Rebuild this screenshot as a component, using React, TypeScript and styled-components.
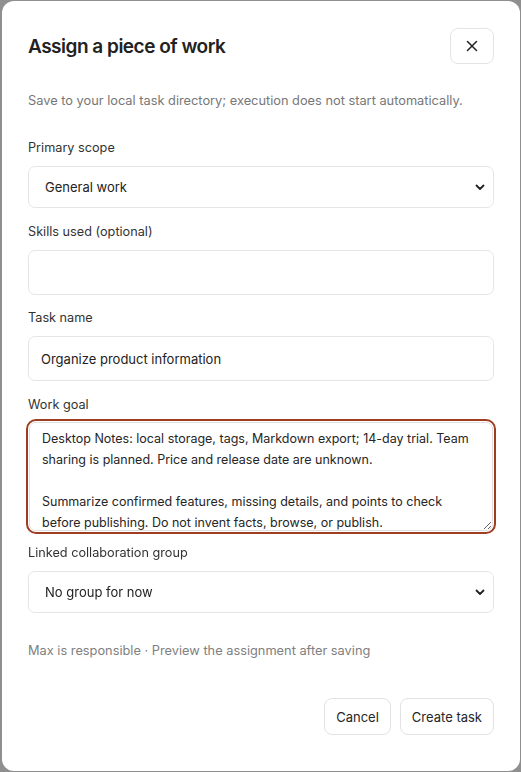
import styled, { createGlobalStyle } from "styled-components";

const GlobalStyle = createGlobalStyle`
  html, body {
    margin: 0;
    padding: 0;
    background: #8f8f8f;
  }
  body {
    font-family: Inter, "Noto Sans", "Liberation Sans", sans-serif;
    color: #262626;
  }
  * { box-sizing: border-box; }
`;

const Backdrop = styled.div`
  padding: 1px 1px 1px 2px;
  min-height: 772px;
`;

const Dialog = styled.div`
  background: #fff;
  border-radius: 12px;
  height: 770px;
  padding: 27px 26px 36px 26px;
  display: flex;
  flex-direction: column;
`;

const Header = styled.div`
  display: flex;
  align-items: center;
  justify-content: space-between;
`;

const Title = styled.h2`
  margin: 0;
  font-size: 19px;
  font-weight: 600;
  letter-spacing: -0.5px;
  color: #222;
`;

const CloseButton = styled.button`
  width: 44px;
  height: 36px;
  border: 1px solid #e4e4e4;
  border-radius: 8px;
  background: #fff;
  display: flex;
  align-items: center;
  justify-content: center;
  padding: 0;
  color: #222;
`;

const Lead = styled.p`
  margin: 29px 0 32px;
  font-size: 12.8px;
  color: #777;
`;

const Field = styled.div<{ $gap?: number; $after?: number }>`
  display: flex;
  flex-direction: column;
  gap: ${(p) => p.$gap ?? 11}px;
  margin-bottom: ${(p) => p.$after ?? 16}px;
`;

const Label = styled.label`
  font-size: 12.7px;
  color: #333;
`;

const Select = styled.div`
  height: 42px;
  border: 1px solid #e6e6e6;
  border-radius: 7px;
  display: flex;
  align-items: center;
  justify-content: space-between;
  padding: 0 7px 0 16px;
  font-size: 13px;
  color: #222;
`;

const Input = styled.input`
  height: 45px;
  border: 1px solid #e6e6e6;
  border-radius: 7px;
  padding: 0 12px;
  font: inherit;
  font-size: 13px;
  color: #222;
  outline: none;
`;

const TextArea = styled.textarea`
  height: 109px;
  border: 1px solid #e0e0e0;
  border-radius: 7px;
  outline: 2px solid #9e3d1f;
  outline-offset: 1px;
  padding: 5px 12px;
  font: inherit;
  font-size: 12.5px;
  line-height: 21px;
  color: #262626;
  resize: vertical;
  margin: 0 1px;
`;

const Meta = styled.p`
  margin: 14px 0 0;
  font-size: 12.8px;
  color: #808080;
`;

const Footer = styled.div`
  margin-top: auto;
  display: flex;
  justify-content: flex-end;
  gap: 9px;
`;

const Button = styled.button`
  height: 37px;
  padding: 0 11px;
  border: 1px solid #e2e2e2;
  border-radius: 8px;
  background: #fff;
  font: inherit;
  font-size: 13px;
  color: #262626;
`;

const Chevron = () => (
  <svg width="12" height="12" viewBox="0 0 12 12" fill="none">
    <path d="M2.5 4.5 6 8l3.5-3.5" stroke="#222" strokeWidth="1.8" strokeLinecap="round" strokeLinejoin="round" />
  </svg>
);

const goal =
  "Desktop Notes: local storage, tags, Markdown export; 14-day trial. Team sharing is planned. Price and release date are unknown.\n\nSummarize confirmed features, missing details, and points to check before publishing. Do not invent facts, browse, or publish.";

export default function App() {
  return (
    <Backdrop>
      <GlobalStyle />
      <Dialog>
        <Header>
          <Title>Assign a piece of work</Title>
          <CloseButton aria-label="Close">
            <svg width="14" height="14" viewBox="0 0 14 14">
              <path d="M2.5 2.5l9 9M11.5 2.5l-9 9" stroke="#222" strokeWidth="1.5" strokeLinecap="round" />
            </svg>
          </CloseButton>
        </Header>
        <Lead>Save to your local task directory; execution does not start automatically.</Lead>
        <Field>
          <Label>Primary scope</Label>
          <Select>
            General work
            <Chevron />
          </Select>
        </Field>
        <Field $after={15}>
          <Label>Skills used (optional)</Label>
          <Input />
        </Field>
        <Field>
          <Label>Task name</Label>
          <Input defaultValue="Organize product information" />
        </Field>
        <Field $gap={10} $after={14}>
          <Label>Work goal</Label>
          <TextArea defaultValue={goal} />
        </Field>
        <Field>
          <Label>Linked collaboration group</Label>
          <Select>
            No group for now
            <Chevron />
          </Select>
        </Field>
        <Meta>Max is responsible · Preview the assignment after saving</Meta>
        <Footer>
          <Button>Cancel</Button>
          <Button>Create task</Button>
        </Footer>
      </Dialog>
    </Backdrop>
  );
}
